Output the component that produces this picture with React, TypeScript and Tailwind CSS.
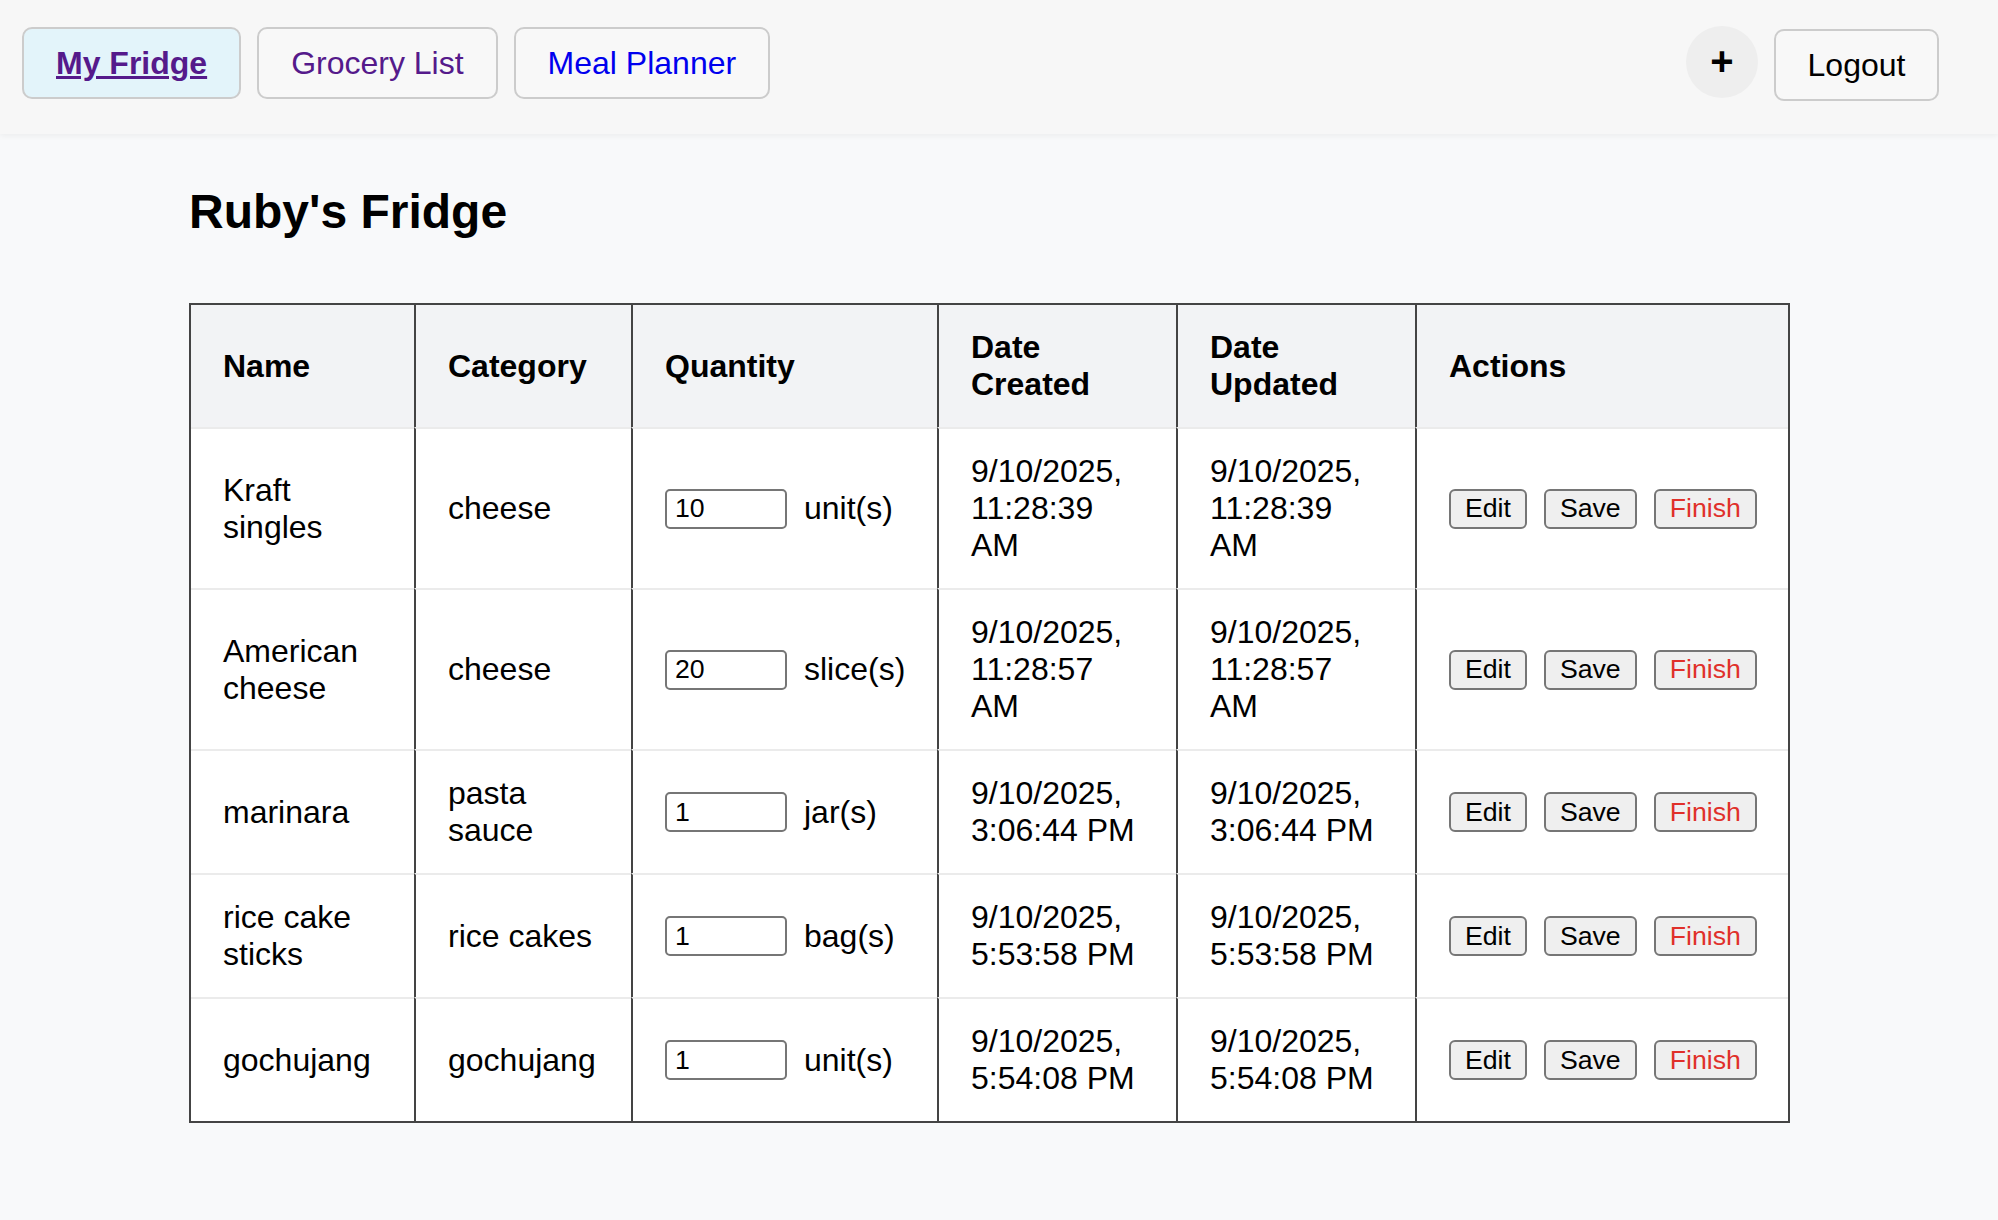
import React from "react";

type Item = {
  name: string;
  category: string;
  qty: string;
  unit: string;
  created: string;
  updated: string;
};

const items: Item[] = [
  { name: "Kraft singles", category: "cheese", qty: "10", unit: "unit(s)", created: "9/10/2025, 11:28:39 AM", updated: "9/10/2025, 11:28:39 AM" },
  { name: "American cheese", category: "cheese", qty: "20", unit: "slice(s)", created: "9/10/2025, 11:28:57 AM", updated: "9/10/2025, 11:28:57 AM" },
  { name: "marinara", category: "pasta sauce", qty: "1", unit: "jar(s)", created: "9/10/2025, 3:06:44 PM", updated: "9/10/2025, 3:06:44 PM" },
  { name: "rice cake sticks", category: "rice cakes", qty: "1", unit: "bag(s)", created: "9/10/2025, 5:53:58 PM", updated: "9/10/2025, 5:53:58 PM" },
  { name: "gochujang", category: "gochujang", qty: "1", unit: "unit(s)", created: "9/10/2025, 5:54:08 PM", updated: "9/10/2025, 5:54:08 PM" },
];

const th = "text-left align-middle font-bold px-8 py-6 bg-[#f2f3f5]";
const td = "align-middle px-8 py-6 bg-white border-t-2 border-t-[#ebebeb]";
const divider = "border-l-2 border-l-[#444]";
const smallBtn =
  "h-[40px] px-[14px] rounded-[6px] border-2 border-[#767676] bg-[#efefef] text-[26.67px] leading-none";

export default function App() {
  return (
    <div className="min-h-screen bg-[#f8f9fa] text-black font-['Liberation_Sans',Arial,sans-serif]">
      {/* top nav */}
      <nav className="h-[134px] flex items-start justify-between pt-[26px] pl-[22px] pr-[59px] bg-[#f7f7f7] shadow-[0_2px_6px_rgba(0,0,0,0.05)]">
        <div className="flex gap-4 mt-[1px]">
          <a className="h-[72px] flex items-center px-8 rounded-[10px] border-2 border-[#cccccc] bg-[#e3f4fa] text-[32px] font-bold underline text-[#551a8b] cursor-pointer">
            My Fridge
          </a>
          <a className="h-[72px] flex items-center px-8 rounded-[10px] border-2 border-[#cccccc] bg-[#f8f8f8] text-[32px] text-[#551a8b] cursor-pointer">
            Grocery List
          </a>
          <a className="h-[72px] flex items-center px-8 rounded-[10px] border-2 border-[#cccccc] bg-[#f8f8f8] text-[32px] text-[#0000ee] cursor-pointer">
            Meal Planner
          </a>
        </div>
        <div className="flex items-start gap-4">
          <button className="h-[72px] w-[72px] rounded-full bg-[#eeeeee] flex items-center justify-center text-[40px] font-bold leading-none pb-[3px]">
            +
          </button>
          <button className="mt-[3px] h-[72px] w-[165px] rounded-[10px] border-2 border-[#cccccc] bg-[#f8f8f8] text-[32px]">
            Logout
          </button>
        </div>
      </nav>

      <main className="pl-[189px] pt-[50px] pb-16">
        <h2 className="text-[48px] leading-[55px] font-bold mb-[64px]">Ruby's Fridge</h2>

        <table className="table-fixed w-[1601px] border-separate border-spacing-0 border-2 border-[#444] text-[32px] leading-[37px]">
          <colgroup>
            <col className="w-[223px]" />
            <col className="w-[217px]" />
            <col className="w-[306px]" />
            <col className="w-[239px]" />
            <col className="w-[239px]" />
            <col className="w-[373px]" />
          </colgroup>
          <thead>
            <tr>
              <th className={th}>Name</th>
              <th className={`${th} ${divider}`}>Category</th>
              <th className={`${th} ${divider}`}>Quantity</th>
              <th className={`${th} ${divider}`}>Date Created</th>
              <th className={`${th} ${divider}`}>Date Updated</th>
              <th className={`${th} ${divider}`}>Actions</th>
            </tr>
          </thead>
          <tbody>
            {items.map((item) => (
              <tr key={item.name}>
                <td className={td}>{item.name}</td>
                <td className={`${td} ${divider}`}>{item.category}</td>
                <td className={`${td} ${divider}`}>
                  <div className="flex items-center gap-[17px] whitespace-nowrap">
                    <input
                      type="number"
                      defaultValue={item.qty}
                      className="h-[40px] w-[122px] rounded-[5px] border-2 border-[#767676] bg-white px-[8px] text-[26.67px] [appearance:textfield]"
                    />
                    <span>{item.unit}</span>
                  </div>
                </td>
                <td className={`${td} ${divider}`}>{item.created}</td>
                <td className={`${td} ${divider}`}>{item.updated}</td>
                <td className={`${td} ${divider}`}>
                  <div className="flex items-center gap-[17px]">
                    <button className={smallBtn}>Edit</button>
                    <button className={smallBtn}>Save</button>
                    <button className={`${smallBtn} text-[#e0302a]`}>Finish</button>
                  </div>
                </td>
              </tr>
            ))}
          </tbody>
        </table>
      </main>
    </div>
  );
}
